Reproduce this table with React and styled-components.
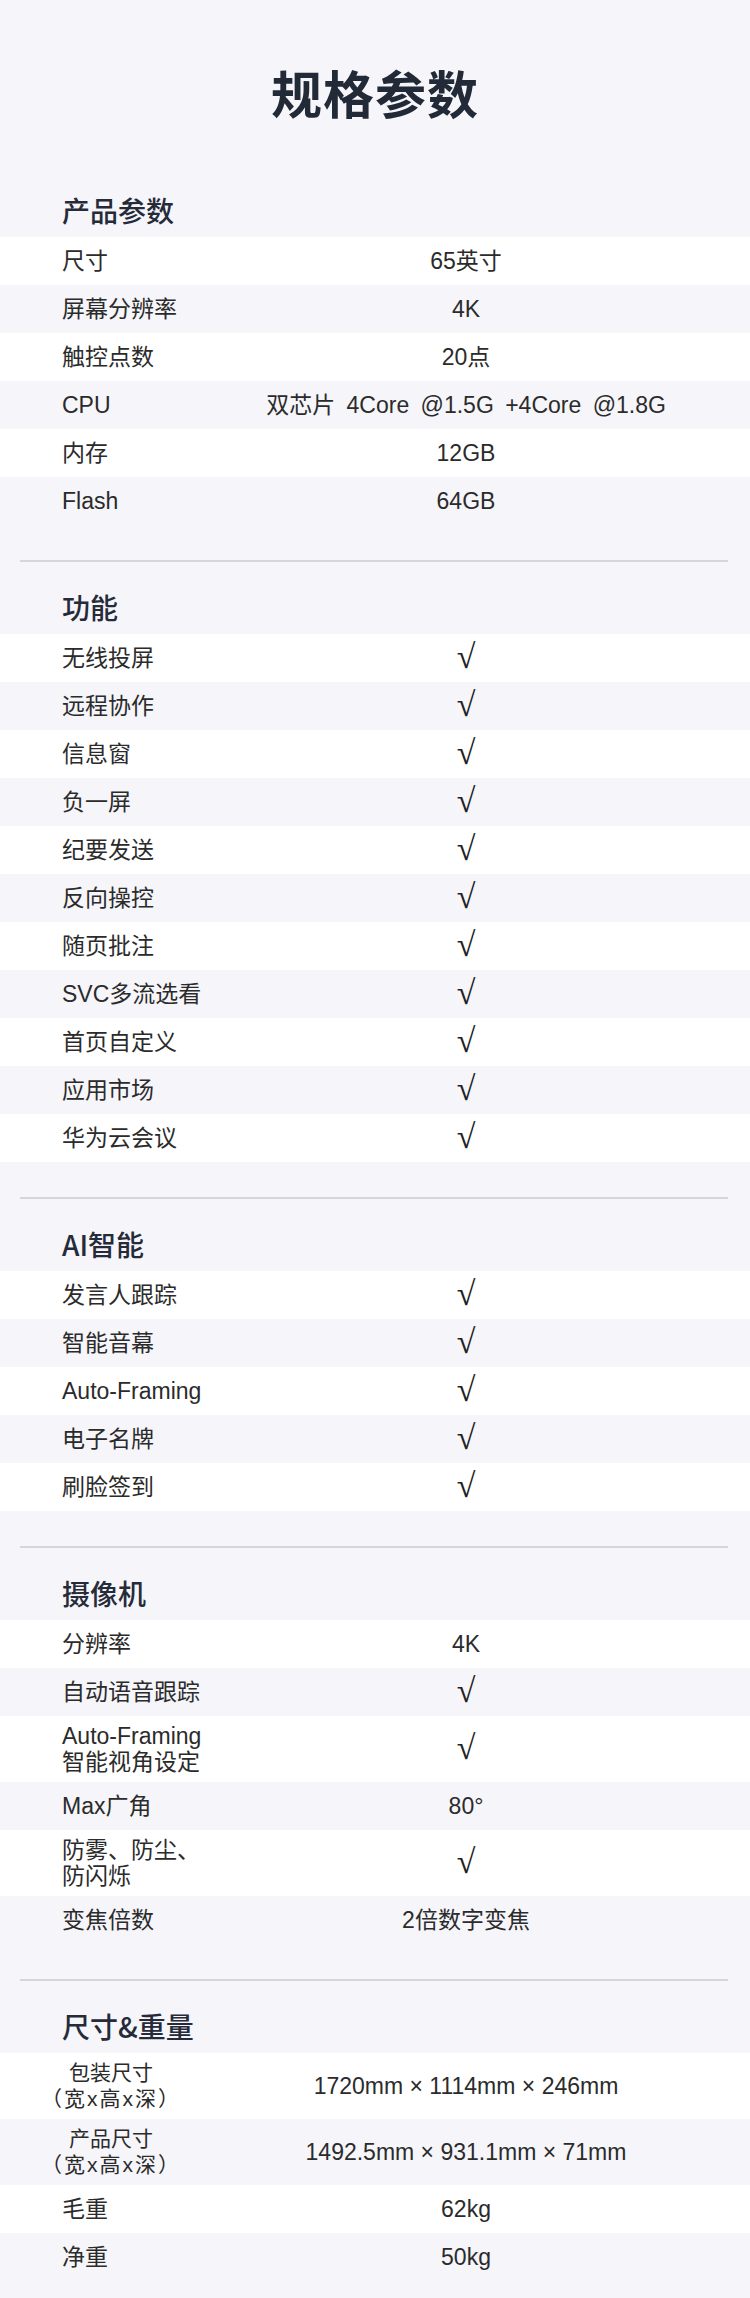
import React from 'react';
import styled, { createGlobalStyle } from 'styled-components';

const GlobalStyle = createGlobalStyle`
	html, body {
		margin: 0;
		padding: 0;
		background: #f5f5fa;
	}
	body {
		font-family: 'Liberation Sans', 'Noto Sans CJK SC', sans-serif;
		color: #2b2b2b;
	}
`;

const Page = styled.div`
	width: 750px;
	min-height: 2298px;
	background: #f5f5fa;
	padding-bottom: 17px;
	box-sizing: border-box;
`;

const Title = styled.h1`
	margin: 0;
	height: 183px;
	display: flex;
	align-items: center;
	justify-content: center;
	font-family: 'Noto Sans CJK SC', sans-serif;
	font-size: 51px;
	font-weight: 700;
	color: #232a37;
	letter-spacing: 1px;
`;

const Divider = styled.hr`
	margin: 35px 22px 18px 20px;
	border: none;
	height: 2px;
	background: #d5d5db;
`;

const SectionTitle = styled.h2`
	margin: 0;
	height: 54px;
	display: flex;
	align-items: center;
	padding-left: 62px;
	font-family: 'Noto Sans CJK SC', sans-serif;
	font-size: 28px;
	font-weight: 500;
	color: #252b38;
`;

const Row = styled.div`
	display: grid;
	grid-template-columns: 182px 1fr;
	align-items: center;
	min-height: 48px;
	padding: 7px 0;
	box-sizing: border-box;
	background: ${(p) => (p.$odd ? '#ffffff' : 'transparent')};
	font-size: 23px;
	line-height: 26px;
`;

const Label = styled.div`
	padding-left: ${(p) => (p.$center ? '40px' : '62px')};
	text-align: ${(p) => (p.$center ? 'center' : 'left')};
	font-size: ${(p) => (p.$center ? '21px' : '23px')};
	white-space: nowrap;
	span {
		display: block;
	}
	span + span {
		letter-spacing: ${(p) => (p.$center ? '2px' : '0')};
	}
`;

const Value = styled.div`
	text-align: center;
	white-space: nowrap;
	word-spacing: ${(p) => (p.$wide ? '5px' : '0')};
`;

const Check = styled.span`
	font-family: 'Liberation Serif', 'DejaVu Serif', serif;
	font-size: 34px;
	line-height: 26px;
	color: #222;
`;

const CHECK = 'check';

const sections = [
	{
		title: '产品参数',
		rows: [
			['尺寸', '65英寸'],
			['屏幕分辨率', '4K'],
			['触控点数', '20点'],
			['CPU', '双芯片 4Core @1.5G +4Core @1.8G'],
			['内存', '12GB'],
			['Flash', '64GB'],
		],
	},
	{
		title: '功能',
		rows: [
			'无线投屏',
			'远程协作',
			'信息窗',
			'负一屏',
			'纪要发送',
			'反向操控',
			'随页批注',
			'SVC多流选看',
			'首页自定义',
			'应用市场',
			'华为云会议',
		].map((l) => [l, CHECK]),
	},
	{
		title: 'AI智能',
		rows: ['发言人跟踪', '智能音幕', 'Auto-Framing', '电子名牌', '刷脸签到'].map((l) => [l, CHECK]),
	},
	{
		title: '摄像机',
		rows: [
			['分辨率', '4K'],
			['自动语音跟踪', CHECK],
			[['Auto-Framing', '智能视角设定'], CHECK],
			['Max广角', '80°'],
			[['防雾、防尘、', '防闪烁'], CHECK],
			['变焦倍数', '2倍数字变焦'],
		],
	},
	{
		title: '尺寸&重量',
		rows: [
			[['包装尺寸', '（宽x高x深）'], '1720mm × 1114mm × 246mm', true],
			[['产品尺寸', '（宽x高x深）'], '1492.5mm × 931.1mm × 71mm', true],
			['毛重', '62kg'],
			['净重', '50kg'],
		],
	},
];

const SpecRow = ({ label, value, center, odd }) => (
	<Row $odd={odd}>
		<Label $center={center}>
			{Array.isArray(label) ? label.map((l, i) => <span key={i}>{l}</span>) : label}
		</Label>
		<Value $wide={label === 'CPU'}>{value === CHECK ? <Check>√</Check> : value}</Value>
	</Row>
);

export default function App() {
	return (
		<Page>
			<GlobalStyle />
			<Title>规格参数</Title>
			{sections.map((s, si) => (
				<section key={s.title}>
					{si > 0 && <Divider />}
					<SectionTitle>{s.title}</SectionTitle>
					{s.rows.map(([label, value, center], i) => (
						<SpecRow key={i} label={label} value={value} center={center} odd={i % 2 === 0} />
					))}
				</section>
			))}
		</Page>
	);
}
